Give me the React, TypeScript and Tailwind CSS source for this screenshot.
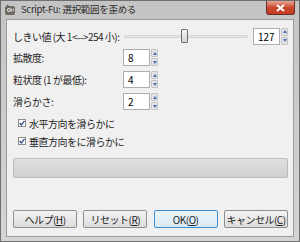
import React from "react";

const font = { fontFamily: '"Noto Sans CJK JP", "Liberation Sans", sans-serif' };

function Spin({ value, w }: { value: string; w: string }) {
  return (
    <div className="flex items-center gap-[1px]">
      <div className={`${w} h-[17px] bg-white border border-[#abadb3] flex items-center pl-[4px] text-[10px] text-black tracking-normal`}>
        {value}
      </div>
      <div className="flex flex-col gap-[1px]">
        <div className="w-[7px] h-[8px] bg-[#e4e4e4] border border-[#c4c4c4] rounded-[1px] flex items-center justify-center">
          <div className="w-0 h-0 border-l-[2px] border-r-[2px] border-b-[3px] border-l-transparent border-r-transparent border-b-[#4a6fb5]" />
        </div>
        <div className="w-[7px] h-[8px] bg-[#e4e4e4] border border-[#c4c4c4] rounded-[1px] flex items-center justify-center">
          <div className="w-0 h-0 border-l-[2px] border-r-[2px] border-t-[3px] border-l-transparent border-r-transparent border-t-[#4a6fb5]" />
        </div>
      </div>
    </div>
  );
}

function Check({ label }: { label: string }) {
  return (
    <div className="flex items-center gap-[3px] pl-[5px] h-[18px]">
      <div className="w-[8px] h-[8px] border border-[#8f8f8f] bg-white flex items-center justify-center">
        <svg width="6" height="6" viewBox="0 0 6 6">
          <path d="M0.6 3 L2.4 4.9 L5.5 0.8" stroke="#2f4c86" strokeWidth="1.3" fill="none" />
        </svg>
      </div>
      <span>{label}</span>
    </div>
  );
}

function Btn({ label, k, focus }: { label: string; k: string; focus?: boolean }) {
  return (
    <div
      className={`w-[64px] h-[18px] rounded-[2px] border flex items-center justify-center text-[#222] bg-gradient-to-b ${
        focus ? "border-[#3c8fd2] from-[#eaf4fb] to-[#d9eaf6]" : "border-[#8e8f8f] from-[#f3f3f3] to-[#dcdcdc]"
      }`}
    >
      {label}(<span className="underline">{k}</span>)
    </div>
  );
}

export default function App() {
  return (
    <div
      className="w-[300px] h-[242px] bg-gradient-to-b from-[#c4c4c4] to-[#d4d4d4] border border-[#707070] flex flex-col"
      style={font}
    >
      {/* title bar */}
      <div className="h-[18px] flex items-start justify-between shrink-0">
        <div className="flex items-center gap-[5px] pl-[3px] pt-[3px]">
          <svg width="12" height="12" viewBox="0 0 12 12">
            <rect x="1" y="2" width="10" height="9" rx="2" fill="#6d6a62" />
            <circle cx="5" cy="6" r="2" fill="#e8e6df" />
            <circle cx="8.3" cy="6" r="1.6" fill="#e8e6df" />
            <circle cx="5" cy="6" r="0.8" fill="#222" />
            <circle cx="8.3" cy="6" r="0.7" fill="#222" />
            <path d="M2 2 L3.5 0.5 L5 2" fill="#6d6a62" />
          </svg>
          <span className="text-[9.5px] tracking-[-0.3px] text-[#2b2b2b] leading-none">Script-Fu: 選択範囲を歪める</span>
        </div>
        <div className="mr-[4px] w-[29px] h-[14px] rounded-b-[3px] border border-t-0 border-[#6b2e25] bg-gradient-to-b from-[#e8a597] via-[#c9482f] to-[#c63a22] flex items-center justify-center">
          <svg width="9" height="8" viewBox="0 0 9 8">
            <path d="M1 1 L8 7 M8 1 L1 7" stroke="white" strokeWidth="2" />
          </svg>
        </div>
      </div>

      {/* client */}
      <div className="mx-[5px] mb-[4px] flex-1 bg-[#f0f0f0] border border-[#9c9c9c] flex flex-col text-[10px] tracking-[-0.5px] text-[#1e1e1e] pl-[6px] pr-[5px] pt-[7px]">
        <div className="flex items-center h-[18px]">
          <span className="w-[111px] whitespace-nowrap">しきい値 (大 1&lt;--&gt;254 小):</span>
          <div className="flex-1 mr-[5px] h-[14px] flex items-center relative">
            <div className="w-full h-[3px] border border-[#d4d4d4] bg-[#e8e8e8]" />
            <div className="absolute left-[57px] top-0 w-[7px] h-[14px] rounded-[1px] border border-[#707070] bg-gradient-to-b from-[#f4f4f4] to-[#d6d6d6]" />
          </div>
          <Spin value="127" w="w-[27px]" />
        </div>

        <div className="flex flex-col gap-[5px] mt-[4px]">
          {[
            ["拡散度:", "8"],
            ["粒状度 (1 が最低):", "4"],
            ["滑らかさ:", "2"],
          ].map(([l, v]) => (
            <div key={l} className="flex items-center h-[17px]">
              <span className="w-[110px] whitespace-nowrap">{l}</span>
              <Spin value={v} w="w-[27px]" />
            </div>
          ))}
        </div>

        <div className="flex flex-col mt-[4px]">
          <Check label="水平方向を滑らかに" />
          <Check label="垂直方向をに滑らかに" />
        </div>

        <div className="mt-[8px] h-[20px] rounded-[2px] border border-[#bcbcbc] bg-gradient-to-b from-[#e0e0e0] to-[#d0d0d0]" />

        <div className="mt-auto mb-[8px] flex justify-between">
          <Btn label="ヘルプ" k="H" />
          <Btn label="リセット" k="R" />
          <Btn label="OK" k="O" focus />
          <Btn label="キャンセル" k="C" />
        </div>
      </div>
    </div>
  );
}
